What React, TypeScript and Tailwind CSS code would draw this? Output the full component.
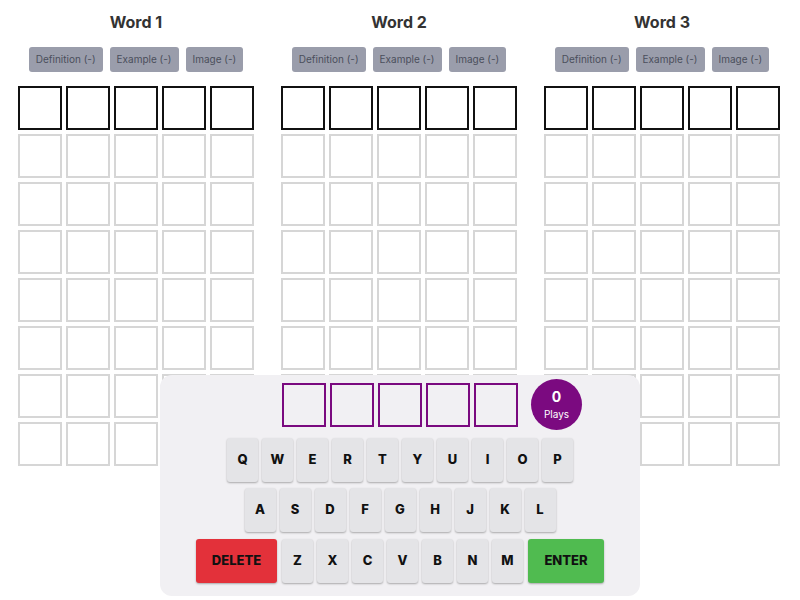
const words = ["Word 1", "Word 2", "Word 3"];
const hints = ["Definition (-)", "Example (-)", "Image (-)"];
const rows = ["QWERTYUIOP", "ASDFGHJKL", "ZXCVBNM"];

const Board = ({ title }: { title: string }) => (
	<div className="flex w-[236px] flex-col items-center">
		<h2 className="mt-[10px] text-[16px] font-bold leading-6 text-[#333]">{title}</h2>
		<div className="mt-[13px] flex gap-[7px]">
			{hints.map((h) => (
				<button
					key={h}
					className="h-[25px] rounded-[3px] bg-[#9a9dab] px-[7px] text-[10px] text-[#4b4f5c]"
				>
					{h}
				</button>
			))}
		</div>
		<div className="mt-[14px] grid grid-cols-5 gap-1">
			{Array.from({ length: 40 }).map((_, i) => (
				<div
					key={i}
					className={
						i < 5
							? "h-11 w-11 border-2 border-[#111]"
							: "h-11 w-11 border-2 border-[#d6d6d6]"
					}
				></div>
			))}
		</div>
	</div>
);

const Key = ({ label }: { label: string }) => (
	<button className="h-11 w-[31px] rounded-[3px] bg-[#e4e4e7] text-[13px] font-extrabold text-[#111] shadow-[0_1px_2px_rgba(0,0,0,0.3)]">
		{label}
	</button>
);

const Keyboard = () => (
	<div className="absolute left-[160px] top-[375px] flex h-[221px] w-[480px] flex-col items-center rounded-xl bg-[#f1f0f3] pt-2">
		<div className="flex gap-1">
			{Array.from({ length: 5 }).map((_, i) => (
				<div key={i} className="h-11 w-11 border-2 border-[#7a0a7f]"></div>
			))}
		</div>
		<div className="absolute left-[371px] top-[4px] flex h-[51px] w-[51px] flex-col items-center justify-center rounded-full bg-[#7b0a80] text-white">
			<span className="text-[14px] font-bold leading-4">0</span>
			<span className="mt-[3px] text-[10px] leading-3">Plays</span>
		</div>
		<div className="mt-[11px] flex gap-1">
			{rows[0].split("").map((k) => (
				<Key key={k} label={k} />
			))}
		</div>
		<div className="mt-[6px] flex gap-1">
			{rows[1].split("").map((k) => (
				<Key key={k} label={k} />
			))}
		</div>
		<div className="mt-[7px] flex gap-1">
			<button className="mr-px h-11 w-[81px] rounded-[3px] bg-[#e3313a] text-[13px] font-extrabold text-[#111] shadow-[0_1px_2px_rgba(0,0,0,0.3)]">
				DELETE
			</button>
			{rows[2].split("").map((k) => (
				<Key key={k} label={k} />
			))}
			<button className="ml-px h-11 w-[76px] rounded-[3px] bg-[#50bb50] text-[13px] font-extrabold text-[#111] shadow-[0_1px_2px_rgba(0,0,0,0.3)]">
				ENTER
			</button>
		</div>
	</div>
);

export default function App() {
	return (
		<div className="relative h-[600px] w-[800px] overflow-hidden bg-white font-['Inter',sans-serif]">
			<div className="flex gap-[27px] pl-[18px]">
				{words.map((w) => (
					<Board key={w} title={w} />
				))}
			</div>
			<Keyboard />
		</div>
	);
}
